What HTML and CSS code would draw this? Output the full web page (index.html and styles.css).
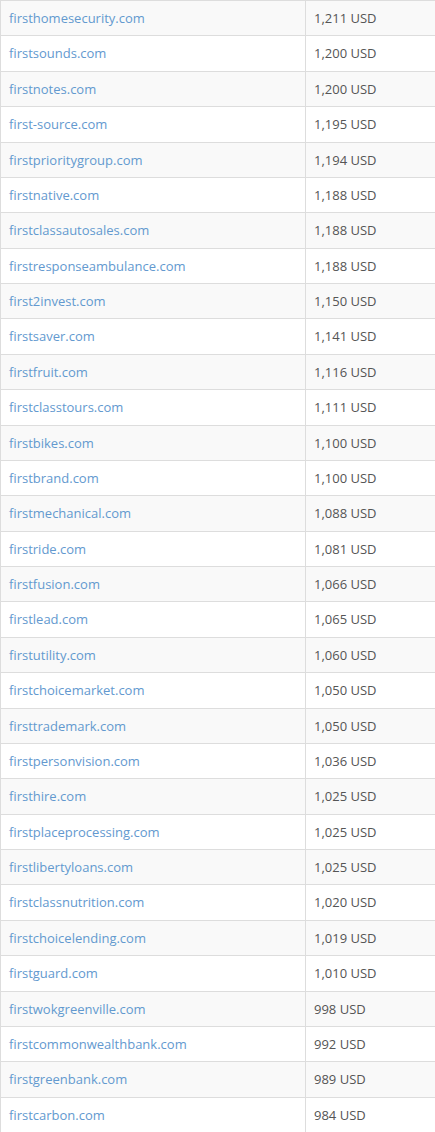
FILE: index.html
```html
<!DOCTYPE html>
<html>
<head>
<meta charset="utf-8">
<link rel="stylesheet" href="styles.css">
</head>
<body>
<table class="domains">
<tbody>
<tr><td class="name"><a href="#">firsthomesecurity.com</a></td><td class="price">1,211 USD</td></tr>
<tr><td class="name"><a href="#">firstsounds.com</a></td><td class="price">1,200 USD</td></tr>
<tr><td class="name"><a href="#">firstnotes.com</a></td><td class="price">1,200 USD</td></tr>
<tr><td class="name"><a href="#">first-source.com</a></td><td class="price">1,195 USD</td></tr>
<tr><td class="name"><a href="#">firstprioritygroup.com</a></td><td class="price">1,194 USD</td></tr>
<tr><td class="name"><a href="#">firstnative.com</a></td><td class="price">1,188 USD</td></tr>
<tr><td class="name"><a href="#">firstclassautosales.com</a></td><td class="price">1,188 USD</td></tr>
<tr><td class="name"><a href="#">firstresponseambulance.com</a></td><td class="price">1,188 USD</td></tr>
<tr><td class="name"><a href="#">first2invest.com</a></td><td class="price">1,150 USD</td></tr>
<tr><td class="name"><a href="#">firstsaver.com</a></td><td class="price">1,141 USD</td></tr>
<tr><td class="name"><a href="#">firstfruit.com</a></td><td class="price">1,116 USD</td></tr>
<tr><td class="name"><a href="#">firstclasstours.com</a></td><td class="price">1,111 USD</td></tr>
<tr><td class="name"><a href="#">firstbikes.com</a></td><td class="price">1,100 USD</td></tr>
<tr><td class="name"><a href="#">firstbrand.com</a></td><td class="price">1,100 USD</td></tr>
<tr><td class="name"><a href="#">firstmechanical.com</a></td><td class="price">1,088 USD</td></tr>
<tr><td class="name"><a href="#">firstride.com</a></td><td class="price">1,081 USD</td></tr>
<tr><td class="name"><a href="#">firstfusion.com</a></td><td class="price">1,066 USD</td></tr>
<tr><td class="name"><a href="#">firstlead.com</a></td><td class="price">1,065 USD</td></tr>
<tr><td class="name"><a href="#">firstutility.com</a></td><td class="price">1,060 USD</td></tr>
<tr><td class="name"><a href="#">firstchoicemarket.com</a></td><td class="price">1,050 USD</td></tr>
<tr><td class="name"><a href="#">firsttrademark.com</a></td><td class="price">1,050 USD</td></tr>
<tr><td class="name"><a href="#">firstpersonvision.com</a></td><td class="price">1,036 USD</td></tr>
<tr><td class="name"><a href="#">firsthire.com</a></td><td class="price">1,025 USD</td></tr>
<tr><td class="name"><a href="#">firstplaceprocessing.com</a></td><td class="price">1,025 USD</td></tr>
<tr><td class="name"><a href="#">firstlibertyloans.com</a></td><td class="price">1,025 USD</td></tr>
<tr><td class="name"><a href="#">firstclassnutrition.com</a></td><td class="price">1,020 USD</td></tr>
<tr><td class="name"><a href="#">firstchoicelending.com</a></td><td class="price">1,019 USD</td></tr>
<tr><td class="name"><a href="#">firstguard.com</a></td><td class="price">1,010 USD</td></tr>
<tr><td class="name"><a href="#">firstwokgreenville.com</a></td><td class="price">998 USD</td></tr>
<tr><td class="name"><a href="#">firstcommonwealthbank.com</a></td><td class="price">992 USD</td></tr>
<tr><td class="name"><a href="#">firstgreenbank.com</a></td><td class="price">989 USD</td></tr>
<tr><td class="name"><a href="#">firstcarbon.com</a></td><td class="price">984 USD</td></tr>
</tbody>
</table>
</body>
</html>
```
FILE: styles.css
```css
html, body {
  margin: 0;
  padding: 0;
  background: #ffffff;
}
body {
  font-family: "Open Sans", "Liberation Sans", sans-serif;
  font-size: 13px;
  color: #555555;
}
.domains {
  border-collapse: collapse;
  width: 100%;
  table-layout: fixed;
  border-left: 1px solid #dddddd;
  border-top: 1px solid #dddddd;
}
.domains tr {
  border-bottom: 1px solid #dddddd;
}
.domains tr:nth-child(odd) {
  background: #f9f9f9;
}
.domains td {
  padding: 8px;
  line-height: 18.37px;
  vertical-align: middle;
  white-space: nowrap;
}
.domains td.name {
  width: 288px;
  border-right: 1px solid #dddddd;
}
.domains a {
  color: #6399cf;
  text-decoration: none;
}
```
